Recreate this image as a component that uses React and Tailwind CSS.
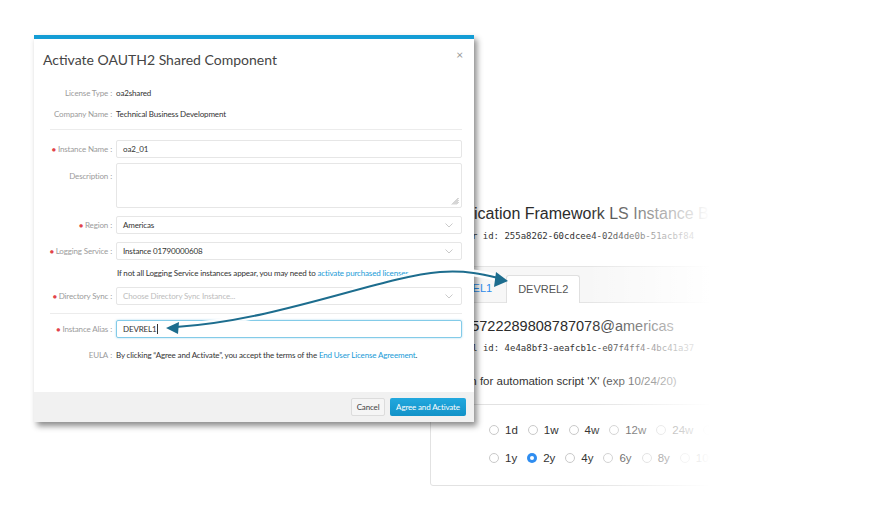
import React from "react";

const sans = "font-['Liberation_Sans',Arial,sans-serif]";
const mono = "font-['DejaVu_Sans_Mono','Liberation_Mono',monospace]";

function Chevron() {
  return (
    <svg width="8" height="5" viewBox="0 0 8 5" className="shrink-0">
      <path d="M0.5 0.5 L4 4 L7.5 0.5" fill="none" stroke="#c4c4c4" strokeWidth="0.9" />
    </svg>
  );
}

function Label({ text, required, top }) {
  return (
    <div className={`w-[66px] shrink-0 text-right text-[#9b9b9b] whitespace-nowrap ${top ? "pt-[7px]" : ""}`}>
      {required && <span className="text-[#e2444b] mr-[2px] text-[7px]">●</span>}
      {text}
      <span className="ml-[2px]">:</span>
    </div>
  );
}

function Row({ label, required, top, className = "", children }) {
  return (
    <div className={`flex ${top ? "items-start" : "items-center"} ${className}`}>
      <Label text={label} required={required} top={top} />
      <div className="ml-[4px] flex-1 min-w-0">{children}</div>
    </div>
  );
}

function Select({ value, placeholder }) {
  return (
    <div className="h-[18px] border border-[#e6e6e6] rounded-[2px] bg-white px-[6px] flex items-center justify-between">
      <span className={placeholder ? "text-[#bdbdbd]" : "text-[#333]"}>{value}</span>
      <span className="mr-[2px]"><Chevron /></span>
    </div>
  );
}

function Modal() {
  return (
    <div className="absolute left-[34px] top-[35px] w-[440px] h-[387px] bg-white flex flex-col shadow-[3px_4px_6px_rgba(0,0,0,0.45)] font-['Lato','Noto_Sans',sans-serif] text-[8px] tracking-[-0.15px] text-[#333]">
      <div className="h-[4px] bg-[#149dd5]" />
      <div className="h-[38px] flex justify-between items-start pl-[9px] pr-[11px] pt-[12px]">
        <div className="text-[14px] leading-[18px] tracking-normal text-[#454545]">Activate OAUTH2 Shared Component</div>
        <div className="text-[12px] leading-[12px] text-[#9a9a9a] mt-[-2px]">×</div>
      </div>
      <div className="flex-1 px-[12px] pt-[5px]">
        <Row label="License Type" className="h-[21px]">oa2shared</Row>
        <Row label="Company Name" className="h-[21px]">Technical Business Development</Row>
        <div className="ml-[4px] mt-[5px] h-px bg-[#ececec]" />
        <Row label="Instance Name" required className="mt-[10px]">
          <div className="h-[18px] border border-[#e6e6e6] rounded-[2px] px-[6px] flex items-center">oa2_01</div>
        </Row>
        <Row label="Description" top className="mt-[5px]">
          <div className="h-[45px] border border-[#e6e6e6] rounded-[2px] flex items-end justify-end p-[2px]">
            <svg width="8" height="8" viewBox="0 0 8 8">
              <path d="M7.5 1 L1 7.5 M7.5 3 L3 7.5 M7.5 5 L5 7.5" stroke="#8a8a8a" strokeWidth="0.7" />
            </svg>
          </div>
        </Row>
        <Row label="Region" required className="mt-[8px]">
          <Select value="Americas" />
        </Row>
        <Row label="Logging Service" required className="mt-[8px]">
          <Select value="Instance 01790000608" />
        </Row>
        <div className="ml-[71px] mt-[7px] h-[12px] leading-[12px] whitespace-nowrap">
          If not all Logging Service instances appear, you may need to{" "}
          <span className="text-[#1a9bd7]">activate purchased licenses</span>.
        </div>
        <Row label="Directory Sync" required className="mt-[8px]">
          <Select value="Choose Directory Sync Instance..." placeholder />
        </Row>
        <div className="ml-[4px] mt-[8px] h-px bg-[#ececec]" />
        <Row label="Instance Alias" required className="mt-[6px]">
          <div className="h-[18px] border border-[#83cbe8] rounded-[2px] px-[6px] flex items-center shadow-[0_0_2px_rgba(60,170,220,0.5)]">
            DEVREL1<span className="w-px h-[10px] bg-[#333] ml-px" />
          </div>
        </Row>
        <Row label="EULA" className="mt-[11px] h-[12px]">
          <span className="whitespace-nowrap">
            By clicking “Agree and Activate”, you accept the terms of the{" "}
            <span className="text-[#1a9bd7]">End User License Agreement</span>.
          </span>
        </Row>
      </div>
      <div className="h-[30px] bg-[#f1f1f1] flex items-center justify-end gap-[5px] pr-[8px]">
        <div className="h-[18px] w-[34px] flex items-center justify-center rounded-[2px] border border-[#dcdcdc] bg-[#f5f5f5] text-[#444]">Cancel</div>
        <div className="h-[18px] w-[76px] flex items-center justify-center rounded-[2px] bg-gradient-to-b from-[#22a8de] to-[#1192c8] text-white">Agree and Activate</div>
      </div>
    </div>
  );
}

function Radio({ label, checked }) {
  return (
    <div className="flex items-center gap-[6px]">
      {checked ? (
        <span className="w-[10px] h-[10px] rounded-full bg-[#2f8df0] flex items-center justify-center">
          <span className="w-[4px] h-[4px] rounded-full bg-white" />
        </span>
      ) : (
        <span className="w-[10px] h-[10px] rounded-full border border-[#c9c9c9] bg-white" />
      )}
      <span>{label}</span>
    </div>
  );
}

function Background() {
  const row1 = ["1d", "1w", "4w", "12w", "24w", "48w"];
  const row2 = ["1y", "2y", "4y", "6y", "8y", "10y"];
  return (
    <div className={`absolute left-[430px] top-[202px] w-[444px] text-[#333] ${sans}`}>
      <div className="pl-[45px] whitespace-nowrap">
        <div className="-ml-[33px] text-[16px] leading-[24px] text-[#2b2b2b]">Application Framework LS Instance Broker</div>
        <div className={`-ml-[41px] mt-[4px] text-[9px] leading-[12px] text-[#333] ${mono}`}>
          Customer id: 255a8262-60cdcee4-02d4de0b-51acbf84
        </div>
      </div>
      <div className="mt-[24px] h-[37px] border-y border-[#e4e4e4] bg-[#f7f7f7] flex items-end text-[11px] whitespace-nowrap">
        <div className="h-[28px] flex items-center ml-[12px] pr-[14px] text-[#2d8ceb]">DEVREL1</div>
        <div className="h-[28px] -mb-px flex items-center px-[11px] bg-white border-x border-t border-[#e0e0e0] rounded-t-[3px] text-[#555]">
          DEVREL2
        </div>
      </div>
      <div className="pl-[45px] whitespace-nowrap">
        <div className="-ml-[28px] mt-[13px] text-[14.5px] leading-[20px] text-[#2b2b2b]">0175722289808787078@americas</div>
        <div className={`-ml-[30px] mt-[6px] text-[9px] leading-[12px] ${mono}`}>
          Serial id: 4e4a8bf3-aeafcb1c-e07f4ff4-4bc41a37
        </div>
        <div className="-ml-[29px] mt-[19px] text-[11.5px] leading-[16px]">
          Token for automation script 'X' (exp 10/24/20)
        </div>
      </div>
      <div className="mt-[15px] h-[82px] border border-[#e2e2e2] rounded-[3px] pl-[58px] pt-[19px] text-[11.5px] leading-[12px]">
        <div className="flex gap-[10px] h-[12px]">
          {row1.map((r) => (
            <Radio key={r} label={r} />
          ))}
        </div>
        <div className="flex gap-[10px] h-[12px] mt-[16px]">
          {row2.map((r) => (
            <Radio key={r} label={r} checked={r === "2y"} />
          ))}
        </div>
      </div>
    </div>
  );
}

function Arrow() {
  const d = "M176 327 C 280 320, 380 277, 440 272 C 468 270, 486 275, 498 278";
  return (
    <svg className="absolute left-0 top-0 pointer-events-none" width="874" height="511" viewBox="0 0 874 511">
      <path d={d} fill="none" stroke="white" strokeOpacity="0.9" strokeWidth="7" strokeLinecap="round" />
      <path d={d} fill="none" stroke="#1d6d8e" strokeWidth="2" />
      <polygon points="166,328 179,322 178,334" fill="#1d6d8e" />
      <polygon points="508,281 496,272 494,287" fill="#1d6d8e" />
    </svg>
  );
}

export default function App() {
  return (
    <div className="relative w-[874px] h-[511px] bg-white overflow-hidden">
      <Background />
      <div className="absolute left-[585px] top-[190px] w-[289px] h-[321px] bg-[linear-gradient(to_right,rgba(255,255,255,0)_0px,#fff_125px)]" />
      <Modal />
      <Arrow />
    </div>
  );
}
